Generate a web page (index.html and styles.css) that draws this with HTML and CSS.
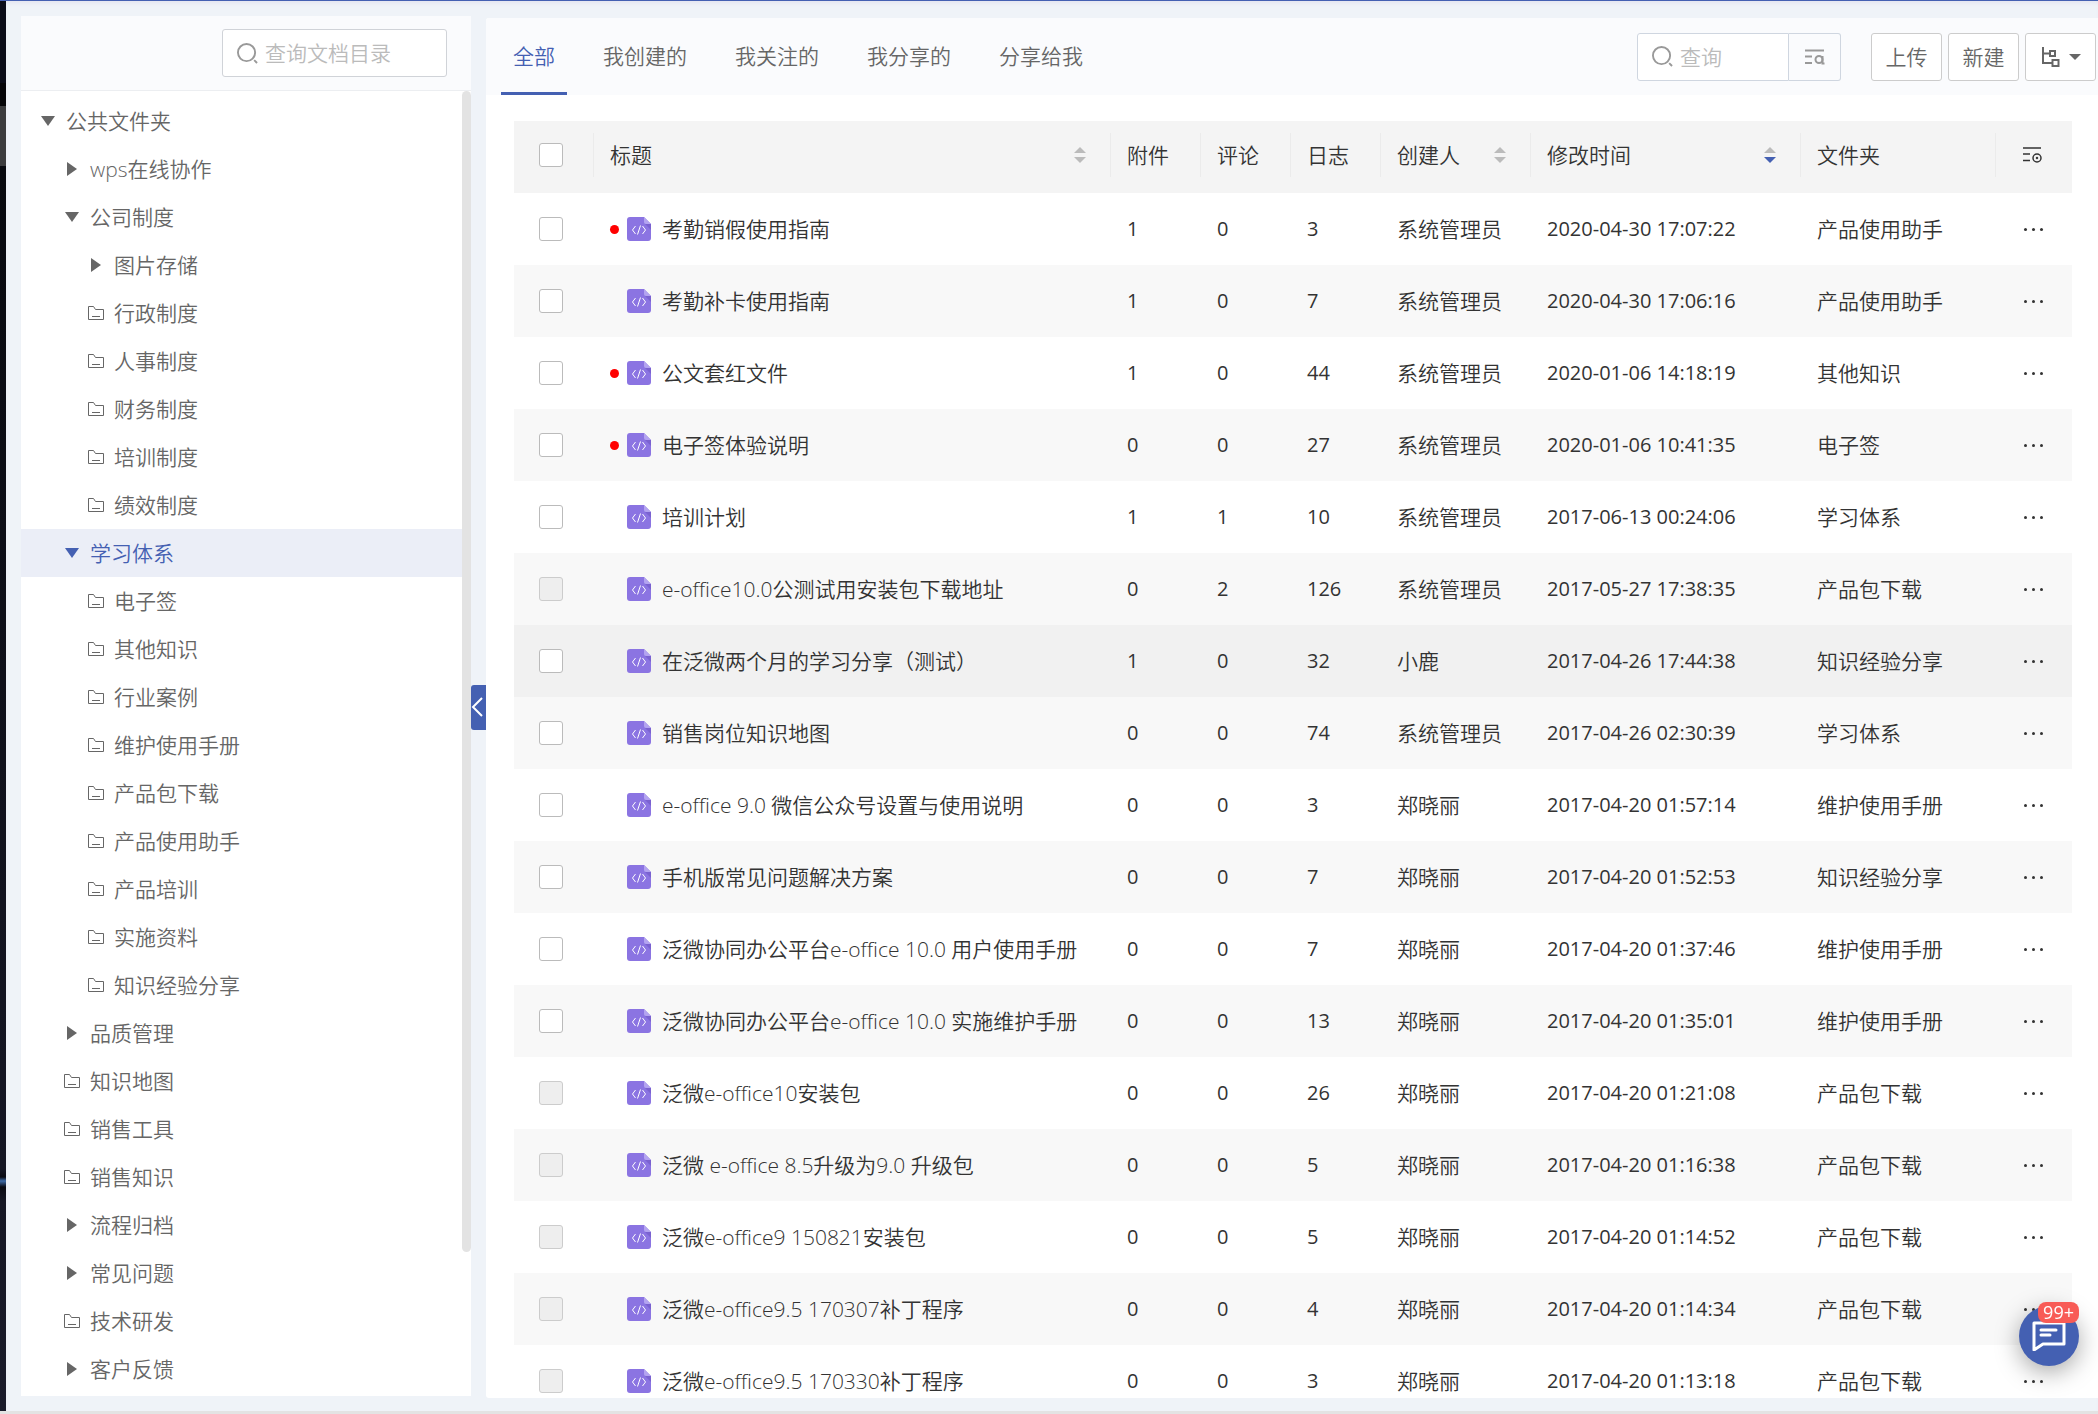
FILE: index.html
```html
<!DOCTYPE html>
<html lang="zh-CN">
<head>
  <meta charset="UTF-8" />
  <meta name="viewport" content="width=device-width, initial-scale=1.0" />
  <title>文档中心</title>
  <link rel="stylesheet" href="styles.css">
</head>
<body>
  <svg class="sprite" aria-hidden="true">
    <symbol id="i-search" viewBox="0 0 22 22"><circle cx="10" cy="10" r="9" /><path d="M18 18l3 3" /></symbol>
    <symbol id="i-folder" viewBox="0 0 16 14"><path d="M.5 13.5V.5h5l2 3h8v10z" /><path d="M4 10.5h8" /></symbol>
    <symbol id="i-down" viewBox="0 0 14 10"><path d="M0 0h14L7 10z" /></symbol>
    <symbol id="i-right" viewBox="0 0 10 14"><path d="M0 0v14l10-7z" /></symbol>
    <symbol id="i-file" viewBox="0 0 24 24">
      <path fill="#8b74e2" d="M3 0h14l7 7v14a3 3 0 0 1-3 3H3a3 3 0 0 1-3-3V3a3 3 0 0 1 3-3z" />
      <path fill="#7a62d0" d="M18 7h6v6z" />
      <path fill="#b3a3f0" d="M17 0l7 7h-5a2 2 0 0 1-2-2z" />
      <path fill="none" stroke="#fff" d="M8.5 9l-3 4 3 4M13.5 8.5l-3 9M15.5 9l3 4-3 4" />
    </symbol>
    <symbol id="i-filter" viewBox="0 0 20 16"><path d="M0 1.5h19M0 7.5h7M0 14h7" /><circle cx="14" cy="10.5" r="3.5" /><path d="M17.5 7v7.500h2" /></symbol>
    <symbol id="i-columns" viewBox="0 0 20 16"><path d="M0 1h18M0 7h7M0 13.5h7" /><circle cx="14" cy="11" r="4" /><circle cx="14" cy="11" r=".5" /></symbol>
    <symbol id="i-tree" viewBox="0 0 20 20"><path d="M2 0v16h9M2 6.5h6" /><path d="M9 4h5v5H9zM11.5 13h6v6h-6z" /></symbol>
  </svg>

  <div class="app">
    <div class="strip"></div>
    <div class="workspace">
      <aside class="side">
        <div class="side-head">
          <label class="search">
            <svg class="ico-search"><use href="#i-search" /></svg>
            <input type="text" placeholder="查询文档目录" aria-label="查询文档目录" />
          </label>
        </div>
        <ul class="tree" id="tree"></ul>
        <div class="scrollbar"></div>
      </aside>

      <button class="collapse" type="button" aria-label="收起">
        <svg viewBox="0 0 12 20"><path d="M11 1l-9 9 9 9" /></svg>
      </button>

      <main class="main">
        <div class="toolbar">
          <nav class="tabs">
            <a href="#" class="active">全部</a>
            <a href="#">我创建的</a>
            <a href="#">我关注的</a>
            <a href="#">我分享的</a>
            <a href="#">分享给我</a>
          </nav>
          <div class="search-group">
            <label class="search">
              <svg class="ico-search"><use href="#i-search" /></svg>
              <input type="text" placeholder="查询" aria-label="查询" />
            </label>
            <button type="button" aria-label="高级查询"><svg><use href="#i-filter" /></svg></button>
          </div>
          <div class="actions">
            <button type="button">上传</button>
            <button type="button">新建</button>
            <button type="button" aria-label="视图">
              <svg class="ico-tree"><use href="#i-tree" /></svg>
              <svg class="ico-caret" viewBox="0 0 12 6"><path d="M0 0h12L6 6z" /></svg>
            </button>
          </div>
        </div>

        <div class="list">
          <table>
            <colgroup>
              <col class="c-check" /><col /><col class="c-num" /><col class="c-num" /><col class="c-num" />
              <col class="c-user" /><col class="c-time" /><col class="c-folder" /><col class="c-more" />
            </colgroup>
            <thead>
              <tr>
                <th><input type="checkbox" aria-label="全选" /></th>
                <th><div class="th">标题<span class="sort"></span></div></th>
                <th><div class="th">附件</div></th>
                <th><div class="th">评论</div></th>
                <th><div class="th">日志</div></th>
                <th><div class="th">创建人<span class="sort"></span></div></th>
                <th><div class="th">修改时间<span class="sort desc"></span></div></th>
                <th><div class="th">文件夹</div></th>
                <th><button type="button" class="more" aria-label="列设置"><svg><use href="#i-columns" /></svg></button></th>
              </tr>
            </thead>
            <tbody id="rows"></tbody>
          </table>
        </div>
      </main>
    </div>
  </div>

  <button class="chat" type="button" aria-label="消息">
    <svg viewBox="0 0 34 30"><path d="M2 2h30v21H11l-9 6z" /><path d="M9 9h15M9 14h9" /></svg>
    <span class="badge">99+</span>
  </button>

  <script src="script.js"></script>
</body>
</html>
```
FILE: styles.css
```css
* { box-sizing: border-box; }
body { margin: 0; height: 100vh; overflow: hidden; display: flex; flex-direction: column; border-top: 1px solid #4460b2; border-bottom: 3px solid #e3e3e3; background: #eff3f8; color: #333; font: 350 21px/32px "Open Sans", "Noto Sans CJK SC", sans-serif; }
a { color: inherit; text-decoration: none; }
button, input { font: inherit; color: inherit; margin: 0; }
button { cursor: pointer; padding: 0; border: 0; background: none; }
.sprite { position: absolute; width: 0; height: 0; }

.app { flex: 1; min-height: 0; display: flex; }
.strip { width: 6px; background: linear-gradient(#0a0c18 82px, #050508 82px, #050508 105px, #3c3c3e 105px, #3c3c3e 165px, #08090f 165px, #12131f 900px, #151624 1168px, #0a0a12 1176px, #3f6ca8 1180px, #0a0a12 1186px, #151624 1200px, #1a1b2a); }
.workspace { flex: 1; min-width: 0; display: flex; padding: 15px 0 13px 15px; box-shadow: inset 0 4px 4px -2px #e4e4f0; }

/* folder tree */
.side { width: 450px; margin-bottom: 2px; display: grid; grid-template: 75px 1fr / 1fr 9px; background: #fff; overflow: hidden; }
.side-head { grid-column: 1 / 3; display: flex; justify-content: flex-end; align-items: center; padding-right: 24px; background: #fafbfd; border-bottom: 1px solid #eceef1; }
.search { display: flex; align-items: center; gap: 7px; width: 225px; height: 48px; padding: 0 14px; background: #fff; border: 1px solid #d0d3d8; border-radius: 3px; }
.search input { flex: 1; min-width: 0; padding: 0; border: 0; outline: 0; background: none; }
.search input::placeholder { color: #bbb; }
.ico-search { flex: none; width: 21px; height: 21px; fill: none; stroke: #999; stroke-width: 2; }
.tree { list-style: none; margin: 0; padding: 6px 0 0; color: #666; overflow: hidden; }
.tree a { display: flex; align-items: center; gap: 6px; height: 48px; padding-left: 15px; }
.tree .l1 { padding-left: 39px; }
.tree .l2 { padding-left: 63px; }
.tree .on { background: #ebeef7; color: #4460b2; }
.tree .slot { width: 24px; display: flex; justify-content: center; }
.tree svg { fill: currentColor; }
.tree .down { width: 14px; height: 10px; }
.tree .right { width: 10px; height: 14px; }
.tree .folder { width: 16px; height: 14px; fill: none; stroke: currentColor; }
.scrollbar { height: 1161px; background: #e3e3e3; border-radius: 5px; }

.collapse { align-self: center; width: 15px; height: 45px; background: #4460b2; border-radius: 3px 0 0 3px; display: flex; align-items: center; }
.collapse svg { width: 12px; height: 20px; fill: none; stroke: #fff; stroke-width: 2; }

/* main */
.main { flex: 1; min-width: 0; margin-top: 2px; background: #fff; border-radius: 3px 0 0 3px; overflow: hidden; }
.toolbar { display: flex; align-items: center; height: 77px; padding: 0 2px 0 15px; background: #fafbfd; color: #666; }
.tabs { display: flex; gap: 24px; align-self: stretch; margin-right: auto; }
.tabs a { display: flex; align-items: center; padding: 2px 12px 0; border-bottom: 3px solid transparent; }
.tabs .active { color: #4460b2; border-color: #4460b2; }
.search-group { display: flex; margin-right: 30px; }
.search-group .search { width: 152px; border-radius: 3px 0 0 3px; border-color: #cfd6e0; }
.search-group button { width: 52px; border: 1px solid #cfd6e0; border-left: 0; border-radius: 0 3px 3px 0; display: flex; align-items: center; justify-content: center; }
.search-group button svg { width: 20px; height: 16px; fill: none; stroke: #999; stroke-width: 2; }
.actions { display: flex; gap: 6px; }
.actions button { width: 71px; height: 48px; display: flex; align-items: center; justify-content: center; gap: 8px; background: #fff; border: 1px solid #ccc; border-radius: 3px; }
.ico-tree { width: 20px; height: 20px; fill: none; stroke: #666; stroke-width: 2; }
.ico-caret { width: 12px; height: 6px; fill: #666; }

.list { padding: 26px 26px 0 28px; }
table { width: 100%; table-layout: fixed; border-collapse: collapse; }
.c-check { width: 80px; }
.c-num { width: 90px; }
.c-user { width: 150px; }
.c-time { width: 270px; }
.c-folder { width: 195px; }
.c-more { width: 76px; }
th, td { height: 72px; padding: 0 0 0 16px; text-align: left; font-weight: inherit; white-space: nowrap; }
th { padding-bottom: 4px; }
th:first-child, td:first-child { padding-left: 25px; }
thead tr { background: #f4f4f4; }
.th { display: flex; align-items: center; justify-content: space-between; height: 44px; padding-right: 24px; border-right: 1px solid #ebebeb; }
th:first-child { background: linear-gradient(#ebebeb, #ebebeb) right 12px / 1px 44px no-repeat; }
tbody tr:nth-child(even) { background: #f8f8f8; }
tbody tr.hover { background: #f1f1f1; }
.num { font-size: 20px; font-weight: 400; }
.sort { display: grid; gap: 4px; }
.sort::before, .sort::after { content: ""; border: 6px solid transparent; }
.sort::before { border-top: 0; border-bottom-color: #bbb; }
.sort::after { border-bottom: 0; border-top-color: #bbb; }
.sort.desc::after { border-top-color: #4460b2; }
input[type="checkbox"] { appearance: none; display: block; width: 24px; height: 24px; background: #fff; border: 1px solid #bbb; border-radius: 3px; }
input[type="checkbox"]:disabled { background: #eee; border-color: #ccc; }
.doc { display: flex; align-items: center; }
.dot { width: 9px; height: 9px; margin-right: 8px; border-radius: 50%; }
.dot.new { background: #f00; }
.doc svg { width: 24px; height: 24px; margin-right: 11px; }
.more { display: flex; justify-content: center; gap: 5px; width: 42px; }
.more i { width: 3px; height: 3px; border-radius: 50%; background: #333; }
.more svg { width: 20px; height: 16px; fill: none; stroke: #333; stroke-width: 1.5; }

/* message bubble */
.chat { position: fixed; right: 19px; bottom: 48px; width: 60px; height: 60px; display: flex; align-items: center; justify-content: center; background: #4460b2; border-radius: 50%; box-shadow: 0 6px 24px rgba(0,0,0,0.35); }
.chat svg { width: 34px; height: 30px; fill: none; stroke: #fff; stroke-width: 3; stroke-linejoin: round; stroke-linecap: round; }
.badge { position: absolute; top: -4px; right: 0; padding: 0 5px; background: #f85b56; color: #fff; border-radius: 8px; font-size: 18px; font-weight: 400; line-height: 21px; }
```
FILE: script.js
```javascript
// [level, type, name]
const folders = [
  [0, 'down', '公共文件夹'],
  [1, 'right', 'wps在线协作'],
  [1, 'down', '公司制度'],
  [2, 'right', '图片存储'],
  [2, 'folder', '行政制度'],
  [2, 'folder', '人事制度'],
  [2, 'folder', '财务制度'],
  [2, 'folder', '培训制度'],
  [2, 'folder', '绩效制度'],
  [1, 'down', '学习体系'],
  [2, 'folder', '电子签'],
  [2, 'folder', '其他知识'],
  [2, 'folder', '行业案例'],
  [2, 'folder', '维护使用手册'],
  [2, 'folder', '产品包下载'],
  [2, 'folder', '产品使用助手'],
  [2, 'folder', '产品培训'],
  [2, 'folder', '实施资料'],
  [2, 'folder', '知识经验分享'],
  [1, 'right', '品质管理'],
  [1, 'folder', '知识地图'],
  [1, 'folder', '销售工具'],
  [1, 'folder', '销售知识'],
  [1, 'right', '流程归档'],
  [1, 'right', '常见问题'],
  [1, 'folder', '技术研发'],
  [1, 'right', '客户反馈']
];
const selected = '学习体系';

document.getElementById('tree').innerHTML = folders.map(([level, type, name]) => `
  <li><a href="#" class="l${level}${name === selected ? ' on' : ''}">
    <span class="slot"><svg class="${type}"><use href="#i-${type}" /></svg></span>${name}
  </a></li>`).join('');

// [new, title, attachments, comments, logs, creator, modified, folder, disabled]
const docs = [
  [1, '考勤销假使用指南', 1, 0, 3, '系统管理员', '2020-04-30 17:07:22', '产品使用助手', 0],
  [0, '考勤补卡使用指南', 1, 0, 7, '系统管理员', '2020-04-30 17:06:16', '产品使用助手', 0],
  [1, '公文套红文件', 1, 0, 44, '系统管理员', '2020-01-06 14:18:19', '其他知识', 0],
  [1, '电子签体验说明', 0, 0, 27, '系统管理员', '2020-01-06 10:41:35', '电子签', 0],
  [0, '培训计划', 1, 1, 10, '系统管理员', '2017-06-13 00:24:06', '学习体系', 0],
  [0, 'e-office10.0公测试用安装包下载地址', 0, 2, 126, '系统管理员', '2017-05-27 17:38:35', '产品包下载', 1],
  [0, '在泛微两个月的学习分享（测试）', 1, 0, 32, '小鹿', '2017-04-26 17:44:38', '知识经验分享', 0],
  [0, '销售岗位知识地图', 0, 0, 74, '系统管理员', '2017-04-26 02:30:39', '学习体系', 0],
  [0, 'e-office 9.0 微信公众号设置与使用说明', 0, 0, 3, '郑晓丽', '2017-04-20 01:57:14', '维护使用手册', 0],
  [0, '手机版常见问题解决方案', 0, 0, 7, '郑晓丽', '2017-04-20 01:52:53', '知识经验分享', 0],
  [0, '泛微协同办公平台e-office 10.0 用户使用手册', 0, 0, 7, '郑晓丽', '2017-04-20 01:37:46', '维护使用手册', 0],
  [0, '泛微协同办公平台e-office 10.0 实施维护手册', 0, 0, 13, '郑晓丽', '2017-04-20 01:35:01', '维护使用手册', 0],
  [0, '泛微e-office10安装包', 0, 0, 26, '郑晓丽', '2017-04-20 01:21:08', '产品包下载', 1],
  [0, '泛微 e-office 8.5升级为9.0 升级包', 0, 0, 5, '郑晓丽', '2017-04-20 01:16:38', '产品包下载', 1],
  [0, '泛微e-office9 150821安装包', 0, 0, 5, '郑晓丽', '2017-04-20 01:14:52', '产品包下载', 1],
  [0, '泛微e-office9.5 170307补丁程序', 0, 0, 4, '郑晓丽', '2017-04-20 01:14:34', '产品包下载', 1],
  [0, '泛微e-office9.5 170330补丁程序', 0, 0, 3, '郑晓丽', '2017-04-20 01:13:18', '产品包下载', 1]
];
const hovered = 6;

document.getElementById('rows').innerHTML = docs.map(([isNew, title, files, comments, logs, user, time, folder, disabled], i) => `
  <tr class="${i === hovered ? 'hover' : ''}">
    <td><input type="checkbox" aria-label="${title}" ${disabled ? 'disabled' : ''} /></td>
    <td><div class="doc"><span class="dot ${isNew ? 'new' : ''}"></span><svg><use href="#i-file" /></svg>${title}</div></td>
    <td class="num">${files}</td>
    <td class="num">${comments}</td>
    <td class="num">${logs}</td>
    <td>${user}</td>
    <td class="num">${time}</td>
    <td>${folder}</td>
    <td><button type="button" class="more" aria-label="更多"><i></i><i></i><i></i></button></td>
  </tr>`).join('');
```
